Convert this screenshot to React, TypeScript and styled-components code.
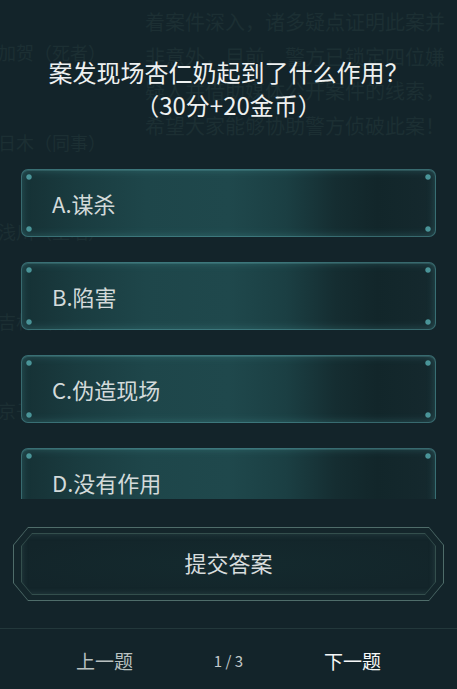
import React from "react";
import styled, { createGlobalStyle } from "styled-components";

const Global = createGlobalStyle`
  html, body { margin: 0; padding: 0; background: #13242a; }
  * { box-sizing: border-box; }
`;

const FONT = `"Noto Sans CJK SC", "Noto Sans", sans-serif`;

const Screen = styled.div`
  position: relative;
  width: 457px;
  height: 689px;
  overflow: hidden;
  background: #13242a;
  font-family: ${FONT};
  display: flex;
  flex-direction: column;
`;

const Backdrop = styled.div`
  position: absolute;
  inset: 0;
  z-index: 0;
  pointer-events: none;
`;

const StoryText = styled.div`
  position: absolute;
  top: 5px;
  left: 145px;
  width: 320px;
  font-size: 20px;
  line-height: 34.5px;
  color: #1c2f33;
  white-space: pre;
`;

const Roster = styled.div`
  position: absolute;
  top: 8px;
  left: -2px;
  display: flex;
  flex-direction: column;
  font-size: 18px;
  line-height: 89.5px;
  color: #1c2f33;
  white-space: nowrap;
`;

const Content = styled.div`
  position: relative;
  z-index: 1;
  display: flex;
  flex-direction: column;
  height: 100%;
`;

const Question = styled.div`
  padding-top: 55px;
  text-align: center;
  color: #eef1f1;
  font-size: 24px;
  line-height: 33px;
  height: 122px;
`;

const OptionList = styled.div`
  height: 377px;
  padding: 47px 21px 0 21px;
  display: flex;
  flex-direction: column;
  gap: 25px;
  overflow: hidden;
  flex-shrink: 0;
`;

const dot = (x: string, y: string) =>
  `radial-gradient(circle at ${x} ${y}, #4a9498 0, #4a9498 2.2px, rgba(74,148,152,0) 3.2px)`;

const Option = styled.div`
  flex-shrink: 0;
  height: 68px;
  border-radius: 7px;
  border: 1px solid rgba(86, 160, 165, 0.55);
  box-shadow: inset 0 0 8px rgba(90, 175, 180, 0.3), inset 0 1px 0 rgba(120, 190, 195, 0.2);
  background:
    ${dot("7px", "7px")},
    ${dot("calc(100% - 7px)", "7px")},
    ${dot("7px", "calc(100% - 7px)")},
    ${dot("calc(100% - 7px)", "calc(100% - 7px)")},
    linear-gradient(90deg, #163135 0%, #1a3c40 14%, #1e464a 30%, #1f484c 50%, #1b3f43 64%, #152d31 76%, #12262a 86%, #15292e 100%);
  display: flex;
  align-items: center;
  padding-left: 30px;
  color: #d3dada;
  font-size: 22px;
`;

const chamfer = (cx: number, cy: number) =>
  `polygon(${cx}px 0, calc(100% - ${cx}px) 0, 100% ${cy}px, 100% calc(100% - ${cy}px), calc(100% - ${cx}px) 100%, ${cx}px 100%, 0 calc(100% - ${cy}px), 0 ${cy}px)`;

const SubmitFrame = styled.div`
  margin: 28px 13px 0 13px;
  height: 74px;
  padding: 1px;
  background: #4f6d6a;
  clip-path: ${chamfer(15, 18)};
`;

const SubmitGap = styled.div`
  height: 100%;
  padding: 5px 7px;
  background: #14262b;
  clip-path: ${chamfer(14, 17)};
`;

const SubmitInnerLine = styled.div`
  height: 100%;
  padding: 1px;
  background: #344f4d;
  clip-path: ${chamfer(11, 13)};
`;

const SubmitFace = styled.button`
  width: 100%;
  height: 100%;
  border: none;
  margin: 0;
  padding: 0 0 5px 0;
  background: radial-gradient(ellipse at center, #142a2e 0%, #13252a 80%);
  box-shadow: inset 0 0 6px rgba(90, 130, 125, 0.3);
  clip-path: ${chamfer(10, 12)};
  color: #d8dddd;
  font-family: ${FONT};
  font-size: 22px;
  cursor: pointer;
`;

const Divider = styled.div`
  margin-top: 27px;
  height: 1px;
  background: #23383b;
`;

const Nav = styled.div`
  flex: 1;
  display: grid;
  grid-template-columns: repeat(3, 124px);
  justify-content: center;
  align-items: center;
  padding-top: 2px;
`;

const NavButton = styled.div<{ $bright?: boolean }>`
  text-align: center;
  font-size: 19px;
  color: ${(p) => (p.$bright ? "#f6f8f8" : "#b9c1c1")};
`;

const Pager = styled.div`
  text-align: center;
  font-size: 15px;
  color: #c3caca;
`;

const story = [
  "着案件深入，诸多疑点证明此案并",
  "非意外，目前，警方已锁定四位嫌",
  "疑人并借助媒体公开案件的线索，",
  "希望大家能够协助警方侦破此案！",
];

const roster = ["加贺（死者）", "日木（同事）", "浅川（主唱）", "吉村（会长）", "京子（妻子）"];

const options = ["A.谋杀", "B.陷害", "C.伪造现场", "D.没有作用"];

export default function App() {
  return (
    <>
      <Global />
      <Screen>
        <Backdrop>
          <StoryText>{story.join("\n")}</StoryText>
          <Roster>
            {roster.map((r) => (
              <span key={r}>{r}</span>
            ))}
          </Roster>
        </Backdrop>
        <Content>
          <Question>
            案发现场杏仁奶起到了什么作用？
            <br />
            （30分+20金币）
          </Question>
          <OptionList>
            {options.map((o) => (
              <Option key={o}>{o}</Option>
            ))}
          </OptionList>
          <SubmitFrame>
            <SubmitGap>
              <SubmitInnerLine>
                <SubmitFace>提交答案</SubmitFace>
              </SubmitInnerLine>
            </SubmitGap>
          </SubmitFrame>
          <Divider />
          <Nav>
            <NavButton>上一题</NavButton>
            <Pager>1 / 3</Pager>
            <NavButton $bright>下一题</NavButton>
          </Nav>
        </Content>
      </Screen>
    </>
  );
}
